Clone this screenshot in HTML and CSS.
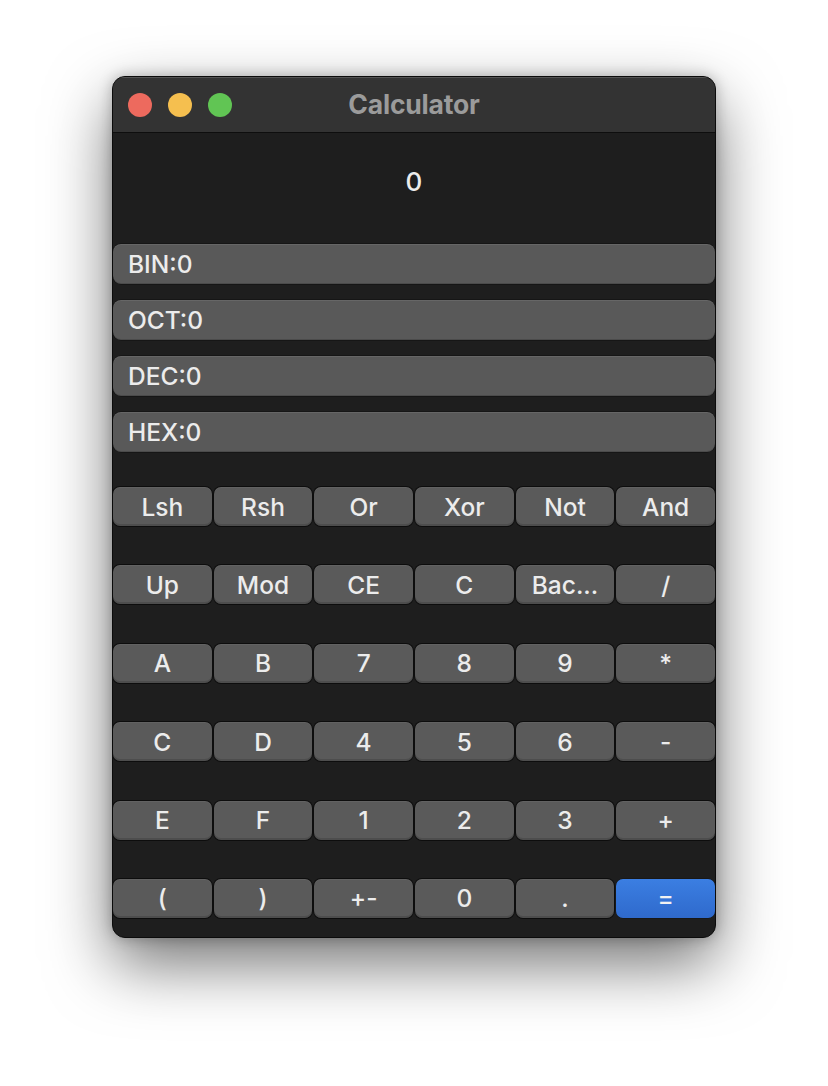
FILE: index.html
```html
<!DOCTYPE html>
<html>
<head>
<meta charset="utf-8">
<link rel="stylesheet" href="styles.css">
</head>
<body>
<div class="window">
  <div class="titlebar">
    <div class="lights">
      <span class="light red"></span>
      <span class="light yellow"></span>
      <span class="light green"></span>
    </div>
    <div class="title">Calculator</div>
    <div></div>
  </div>
  <div class="content">
    <div class="display">0</div>
    <div class="fields">
      <div class="field">BIN:0</div>
      <div class="field">OCT:0</div>
      <div class="field">DEC:0</div>
      <div class="field">HEX:0</div>
    </div>
    <div class="keypad">
      <div class="key">Lsh</div><div class="key">Rsh</div><div class="key">Or</div><div class="key">Xor</div><div class="key">Not</div><div class="key">And</div>
      <div class="key">Up</div><div class="key">Mod</div><div class="key">CE</div><div class="key">C</div><div class="key">Bac...</div><div class="key">/</div>
      <div class="key">A</div><div class="key">B</div><div class="key">7</div><div class="key">8</div><div class="key">9</div><div class="key">*</div>
      <div class="key">C</div><div class="key">D</div><div class="key">4</div><div class="key">5</div><div class="key">6</div><div class="key">-</div>
      <div class="key">E</div><div class="key">F</div><div class="key">1</div><div class="key">2</div><div class="key">3</div><div class="key">+</div>
      <div class="key">(</div><div class="key">)</div><div class="key">+-</div><div class="key">0</div><div class="key">.</div><div class="key primary">=</div>
    </div>
  </div>
</div>
</body>
</html>
```

FILE: styles.css
```css
html, body {
  margin: 0;
  padding: 0;
  background: #ffffff;
}
body {
  display: flex;
  justify-content: center;
  padding-top: 76px;
  height: 1086px;
  box-sizing: border-box;
  font-family: "Inter", "Liberation Sans", sans-serif;
}
.window {
  width: 604px;
  height: 862px;
  box-sizing: border-box;
  border: 1px solid #0b0b0b;
  border-radius: 13px;
  background: #1e1e1e;
  overflow: hidden;
  box-shadow: 0 26px 64px rgba(0, 0, 0, 0.55), 0 0 14px rgba(0, 0, 0, 0.25);
  display: flex;
  flex-direction: column;
}
.titlebar {
  height: 55px;
  flex: none;
  background: #333333;
  border-bottom: 1px solid #0e0e0e;
  box-shadow: inset 0 1px 0 rgba(255, 255, 255, 0.16);
  display: grid;
  grid-template-columns: 1fr auto 1fr;
  align-items: center;
}
.lights {
  display: flex;
  gap: 16px;
  padding-left: 15px;
}
.light {
  width: 24px;
  height: 24px;
  border-radius: 50%;
}
.red { background: #ed6a5e; }
.yellow { background: #f5bf4f; }
.green { background: #61c554; }
.title {
  color: #9b9b9b;
  font-weight: 700;
  font-size: 26.5px;
  letter-spacing: -0.2px;
  padding-bottom: 2px;
}
.content {
  display: flex;
  flex-direction: column;
}
.display {
  height: 111px;
  display: flex;
  align-items: center;
  justify-content: center;
  color: #ececec;
  font-size: 26px;
  font-weight: 500;
  padding-bottom: 15px;
  box-sizing: border-box;
}
.fields {
  display: flex;
  flex-direction: column;
  gap: 16px;
}
.field {
  height: 40px;
  box-sizing: border-box;
  background: #595959;
  border-radius: 8px;
  color: #ececec;
  font-size: 24.5px;
  font-weight: 500;
  display: flex;
  align-items: center;
  padding-left: 15px;
  box-shadow: inset 0 1px 0 rgba(255, 255, 255, 0.08), inset 0 -1px 0 rgba(0, 0, 0, 0.15), 0 0 0 0.5px rgba(0, 0, 0, 0.5);
}
.keypad {
  margin-top: 35px;
  display: grid;
  grid-template-columns: repeat(6, 1fr);
  grid-auto-rows: 39px;
  column-gap: 2px;
  row-gap: 39.4px;
}
.key {
  background: #5a5a5a;
  border-radius: 7px;
  color: #ececec;
  font-size: 24.5px;
  font-weight: 500;
  display: flex;
  align-items: center;
  justify-content: center;
  box-shadow: inset 0 -2px 0 rgba(0, 0, 0, 0.14), inset 0 1px 0 rgba(255, 255, 255, 0.05), 0 0 0 1px rgba(0, 0, 0, 0.55);
}
.key.primary {
  background: linear-gradient(#3b7ee2, #2f6acc);
  color: #f2f2f2;
  box-shadow: 0 0 0 0.5px rgba(0, 0, 0, 0.4);
}
```
